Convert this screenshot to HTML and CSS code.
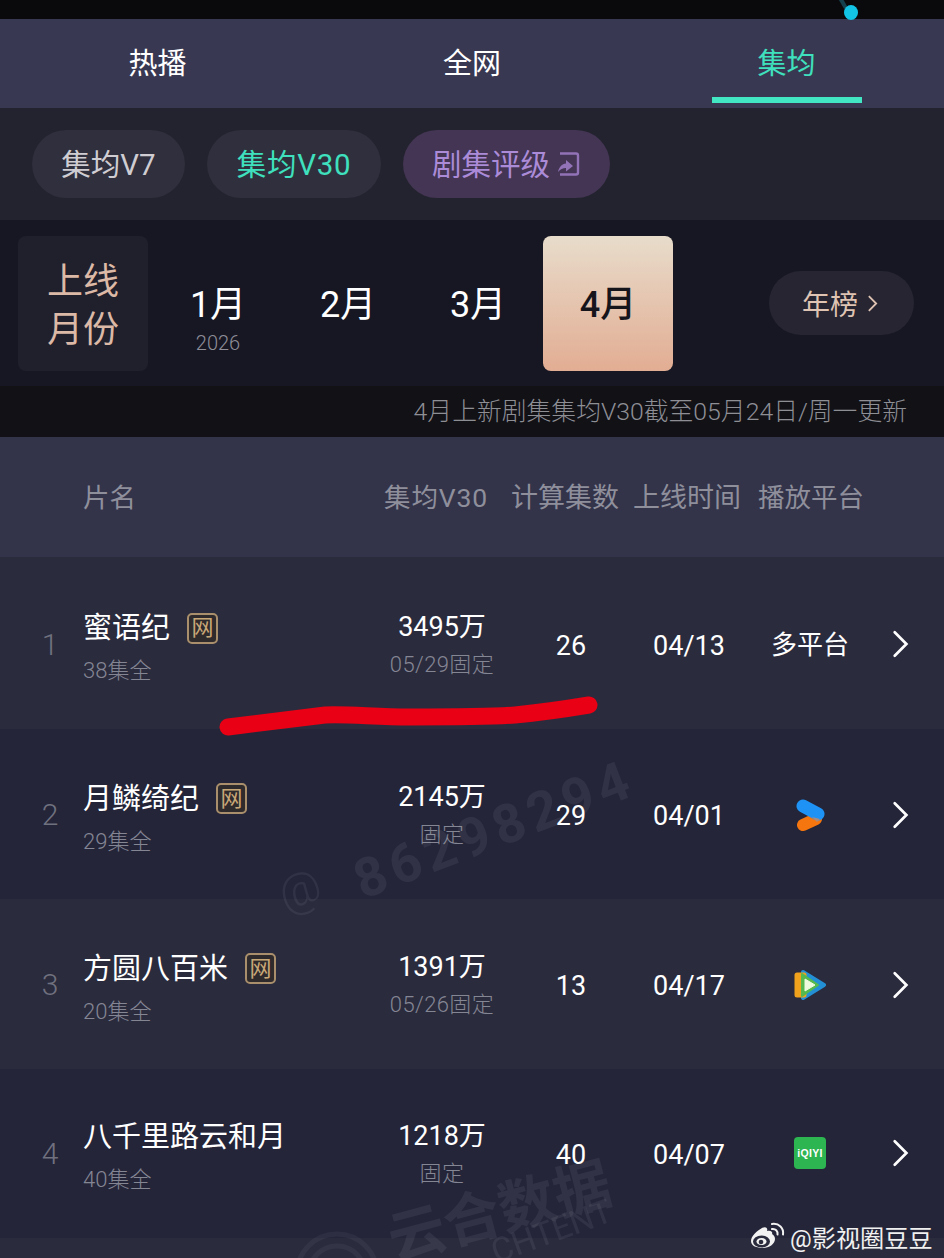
FILE: index.html
```html
<!DOCTYPE html>
<html lang="zh-CN">
<head>
  <meta charset="UTF-8">
  <title>集均榜</title>
  <link rel="stylesheet" href="styles.css">
</head>
<body>
  <div class="page">
    <div class="status"><span class="status-dot"></span></div>

    <div class="tabs">
      <div class="tab">热播</div>
      <div class="tab">全网</div>
      <div class="tab active">集均</div>
    </div>

    <div class="chips">
      <div class="chip">集均V7</div>
      <div class="chip green">集均V30</div>
      <div class="chip purple">剧集评级
        <svg class="share" viewBox="0 0 24 26" width="24" height="26" fill="none">
          <path d="M3 2.500h16a2 2 0 0 1 2 2v17a2 2 0 0 1-2 2H3" stroke="#9273b8" stroke-width="2.400"/>
          <path d="M1 21c1-5 4-8 8-8.500V9l7 6-7 5.500V17c-3 0-6 1.500-8 4z" fill="#9273b8"/>
        </svg>
      </div>
    </div>

    <div class="months">
      <div class="month-label">上线<br>月份</div>
      <div class="month"><b>1月</b><small>2026</small></div>
      <div class="month"><b>2月</b></div>
      <div class="month"><b>3月</b></div>
      <div class="month current"><b>4月</b></div>
      <div class="year-btn">年榜
        <svg viewBox="0 0 12 20" width="11" height="19" fill="none"><path d="M2 2l8 8-8 8" stroke="#dfc3b3" stroke-width="2"/></svg>
      </div>
    </div>

    <div class="note">4月上新剧集集均V30截至05月24日/周一更新</div>

    <div class="row head">
      <div class="name">片名</div>
      <div class="score">集均V30</div>
      <div class="count">计算集数</div>
      <div class="date">上线时间</div>
      <div class="platform">播放平台</div>
    </div>

    <div class="row light first">
      <div class="rank">1</div>
      <div class="name">
        <div class="title">蜜语纪<span class="tag">网</span></div>
        <div class="sub">38集全</div>
      </div>
      <div class="score"><div class="num">3495万</div><div class="sub">05/29固定</div></div>
      <div class="count">26</div>
      <div class="date">04/13</div>
      <div class="platform many">多平台</div>
      <div class="go"><svg viewBox="0 0 20 30" width="18" height="28" fill="none"><path d="M3 2l13 13L3 28" stroke="#fff" stroke-width="3" stroke-linecap="round"/></svg></div>
    </div>

    <div class="row">
      <div class="rank">2</div>
      <div class="name">
        <div class="title">月鳞绮纪<span class="tag">网</span></div>
        <div class="sub">29集全</div>
      </div>
      <div class="score"><div class="num">2145万</div><div class="sub">固定</div></div>
      <div class="count">29</div>
      <div class="date">04/01</div>
      <div class="platform">
        <svg class="logo" viewBox="0 0 31 34" width="31" height="34">
          <path d="M8 27L21 21" stroke="#f5760f" stroke-width="12" stroke-linecap="round"/>
          <path d="M8 8L23 16" stroke="#1e93f5" stroke-width="13" stroke-linecap="round"/>
          <path d="M17 19l8 2-3 3z" fill="#a98a80"/>
        </svg>
      </div>
      <div class="go"><svg viewBox="0 0 20 30" width="18" height="28" fill="none"><path d="M3 2l13 13L3 28" stroke="#fff" stroke-width="3" stroke-linecap="round"/></svg></div>
    </div>

    <div class="row light">
      <div class="rank">3</div>
      <div class="name">
        <div class="title">方圆八百米<span class="tag">网</span></div>
        <div class="sub">20集全</div>
      </div>
      <div class="score"><div class="num">1391万</div><div class="sub">05/26固定</div></div>
      <div class="count">13</div>
      <div class="date">04/17</div>
      <div class="platform">
        <svg class="logo" viewBox="0 0 36 34" width="36" height="34" stroke-linejoin="round">
          <path d="M11 4L32 17 11 30z" fill="#2390d6" stroke="#2390d6" stroke-width="4"/>
          <path d="M5 7h7v20H5z" fill="#f0a21d" stroke="#f0a21d" stroke-width="5"/>
          <path d="M10 6L26 17 10 28z" fill="#55b94e" stroke="#55b94e" stroke-width="2"/>
          <path d="M13 11L23 17 13 23z" fill="#eefadc" stroke="#eefadc"/>
        </svg>
      </div>
      <div class="go"><svg viewBox="0 0 20 30" width="18" height="28" fill="none"><path d="M3 2l13 13L3 28" stroke="#fff" stroke-width="3" stroke-linecap="round"/></svg></div>
    </div>

    <div class="row last">
      <div class="rank">4</div>
      <div class="name">
        <div class="title">八千里路云和月</div>
        <div class="sub">40集全</div>
      </div>
      <div class="score"><div class="num">1218万</div><div class="sub">固定</div></div>
      <div class="count">40</div>
      <div class="date">04/07</div>
      <div class="platform"><span class="iqiyi">iQIYI</span></div>
      <div class="go"><svg viewBox="0 0 20 30" width="18" height="28" fill="none"><path d="M3 2l13 13L3 28" stroke="#fff" stroke-width="3" stroke-linecap="round"/></svg></div>
    </div>

    <div class="row-rest"></div>

    <!-- things lying over the table -->
    <svg class="scribble" viewBox="0 0 944 60" width="944" height="60" fill="none">
      <path d="M228 35C270 30 300 26 325 23C350 22 375 25 410 25C450 25 490 25 515 23C545 20 565 17 589 13" stroke="#e90014" stroke-width="17" stroke-linecap="round"/>
    </svg>
    <div class="mark mark-at">@</div>
    <div class="mark mark-id">86298294</div>
    <svg class="mark-ring" viewBox="0 0 90 30" width="90" height="30" fill="none">
      <circle cx="45" cy="46" r="40" stroke="#fff" stroke-width="5"/>
      <circle cx="45" cy="46" r="28" stroke="#fff" stroke-width="5"/>
    </svg>
    <div class="mark mark-logo">云合数据</div>
    <div class="mark mark-en">CHTENT</div>

    <div class="weibo">
      <svg viewBox="0 0 36 30" width="36" height="30" fill="none">
        <path d="M1 19c0-5 6-10 11-13 4-2 6 0 5 3 4-1 6 1 5 3 2 1 3 3 3 5 0 5-6 9-12 9S1 24 1 19z" fill="#f2f2f2"/>
        <ellipse cx="11.500" cy="19.500" rx="8.500" ry="6" fill="#2a2b3d"/>
        <ellipse cx="11.500" cy="19.500" rx="5" ry="3.600" fill="#f2f2f2"/>
        <circle cx="11" cy="20" r="2.300" fill="#2a2b3d"/>
        <path d="M22 7c3.500-.5 6 2 5.500 5.500" stroke="#f2f2f2" stroke-width="2" stroke-linecap="round"/>
        <path d="M22 2c7-1 12 4 11 10.500" stroke="#f2f2f2" stroke-width="2" stroke-linecap="round"/>
      </svg>
      <span>@影视圈豆豆</span>
    </div>
  </div>
</body>
</html>
```

FILE: styles.css
```css
html, body {
  margin: 0;
  padding: 0;
}
body {
  font-family: Roboto, "Noto Sans CJK SC", sans-serif;
  background-color: #242539;
  color: #fff;
}
.page {
  position: relative;
  width: 944px;
  height: 1258px;
  overflow: hidden;
}
.status {
  position: relative;
  height: 19px;
  background-color: #0a0a0c;
}
.status::before {
  content: "";
  position: absolute;
  left: 841px;
  top: -3px;
  width: 4px;
  height: 12px;
  background-color: #15414f;
  transform: rotate(-30deg);
}
.status-dot {
  position: absolute;
  left: 844px;
  top: 5px;
  width: 14px;
  height: 15px;
  border-radius: 50%;
  background-color: #12c4e6;
}
.tabs {
  display: grid;
  grid-template-columns: 315px 314px 315px;
  height: 89px;
  background-color: #393852;
}
.tab {
  display: flex;
  justify-content: center;
  align-items: center;
  height: 89px;
  font-size: 29px;
  padding-bottom: 6px;
  box-sizing: border-box;
}
.tab.active {
  position: relative;
  color: #3fe0bd;
}
.tab.active::after {
  content: "";
  position: absolute;
  left: 83px;
  top: 78px;
  width: 150px;
  height: 6px;
  background-color: #43e6c2;
}
.chips {
  display: flex;
  align-items: center;
  gap: 22px;
  height: 112px;
  padding-left: 32px;
  background-color: #23232f;
}
.chip {
  display: flex;
  align-items: center;
  gap: 7px;
  width: 153px;
  height: 68px;
  justify-content: center;
  padding-bottom: 4px;
  box-sizing: border-box;
  border-radius: 34px;
  font-size: 29.500px;
  color: #cfcdd2;
  background-color: #2f2f3d;
}
.chip.green {
  width: 174px;
  letter-spacing: 0.700px;
  color: #3fe0bd;
}
.chip.purple {
  width: 207px;
  color: #ab8bd8;
  background-color: #433553;
}
.share {
  margin-top: 3px;
}
.months {
  display: flex;
  align-items: center;
  height: 166px;
  background-color: #171723;
}
.month-label {
  display: flex;
  align-items: center;
  justify-content: center;
  width: 130px;
  height: 135px;
  margin: 0 5px 0 18px;
  padding-top: 5px;
  box-sizing: border-box;
  border-radius: 8px;
  font-size: 36px;
  line-height: 48px;
  text-align: center;
  color: #dcb9a6;
  background-color: #20202d;
}
.month {
  position: relative;
  display: flex;
  align-items: center;
  justify-content: center;
  width: 130px;
  height: 135px;
  padding-bottom: 4px;
  box-sizing: border-box;
}
.month b {
  font-size: 36px;
  font-weight: 400;
}
.month small {
  position: absolute;
  left: 0;
  right: 0;
  top: 95px;
  text-align: center;
  font-size: 20px;
  font-weight: 300;
  color: #8f8e99;
}
.month.current {
  border-radius: 8px;
  color: #17151c;
  background: linear-gradient(#e8dccb, #e2ad93);
}
.month.current b {
  font-weight: 500;
}
.year-btn {
  display: flex;
  align-items: center;
  justify-content: center;
  gap: 9px;
  width: 145px;
  height: 64px;
  margin-left: 96px;
  padding-right: 3px;
  box-sizing: border-box;
  border-radius: 32px;
  font-size: 28px;
  color: #dfc3b3;
  background-color: #262531;
}
.note {
  height: 51px;
  line-height: 51px;
  padding-right: 37px;
  text-align: right;
  font-size: 24.800px;
  font-weight: 300;
  color: #8e8e95;
  background-color: #111116;
}
.row {
  display: grid;
  grid-template-columns: 83px 263px 192px 66px 170px 72px 98px;
  align-items: center;
  height: 170px;
  padding-top: 4px;
  box-sizing: border-box;
  background-color: #242539;
  text-align: center;
}
.row.light {
  background-color: #2a2b3d;
}
.row.first {
  height: 172px;
  padding-top: 5px;
}
.row.last {
  height: 169px;
  padding-top: 2px;
}
.row-rest {
  height: 20px;
  background-color: #2a2b3d;
}
.row.head {
  grid-template-columns: 301px 127px 122px 125px 185px;
  height: 120px;
  padding: 0 0 3px 83px;
  font-size: 26.500px;
  color: #8f8f9c;
  background-color: #33344a;
  text-align: left;
  white-space: nowrap;
}
.head .score {
  padding-bottom: 0;
  letter-spacing: 0.900px;
}
.head .platform {
  justify-content: flex-start;
  padding-bottom: 0;
  font-size: 26.500px;
}
.rank {
  padding: 0 0 3px 17px;
  box-sizing: border-box;
  text-align: center;
  font-size: 30px;
  font-weight: 300;
  color: #70717f;
  white-space: nowrap;
}
.name {
  padding-top: 2px;
  text-align: left;
}
.head .name {
  padding-top: 0;
}
.title {
  display: flex;
  align-items: center;
  font-size: 29px;
  line-height: 42px;
}
.tag {
  display: flex;
  align-items: center;
  justify-content: center;
  box-sizing: border-box;
  width: 31px;
  height: 31px;
  margin-left: 17px;
  border: 2px solid #a98f6c;
  border-radius: 5px;
  font-size: 22px;
  color: #c9a878;
  background-color: #2f2a2c;
}
.sub {
  margin-top: 7px;
  font-size: 22px;
  line-height: 30px;
  font-weight: 300;
  color: #858694;
}
.score {
  padding-bottom: 4px;
}
.num {
  font-size: 27px;
  line-height: 38px;
}
.score .sub {
  margin-top: 4px;
  letter-spacing: 0.400px;
}
.count,
.date {
  font-size: 27px;
}
.platform {
  display: flex;
  justify-content: center;
  align-items: center;
  padding-bottom: 3px;
  font-size: 26px;
  white-space: nowrap;
}
.platform.many {
  padding-bottom: 6px;
}
.logo {
  filter: blur(0.4px);
}
.go {
  display: flex;
  justify-content: center;
  padding: 0 0 3px 12px;
  box-sizing: border-box;
}
.iqiyi {
  display: flex;
  align-items: center;
  justify-content: center;
  width: 32px;
  height: 32px;
  border-radius: 4px;
  font-family: "Liberation Sans", sans-serif;
  font-size: 10.500px;
  letter-spacing: 0.300px;
  font-weight: 700;
  color: #fff;
  background-color: #2db551;
}
.scribble {
  position: absolute;
  left: 0;
  top: 692px;
}
.mark {
  position: absolute;
  color: #fff;
  opacity: 0.06;
  line-height: 1;
  white-space: nowrap;
  transform: rotate(-21deg);
  transform-origin: left bottom;
}
.mark-at {
  left: 288px;
  top: 872px;
  font-size: 46px;
  font-weight: 300;
}
.mark-id {
  left: 366px;
  top: 854px;
  font-size: 54px;
  font-weight: 700;
  letter-spacing: 6px;
}
.mark-ring {
  position: absolute;
  left: 292px;
  top: 1228px;
  opacity: 0.04;
}
.mark-logo {
  left: 397px;
  top: 1212px;
  font-size: 57px;
  font-weight: 700;
  transform: rotate(-15deg);
}
.mark-en {
  left: 498px;
  top: 1235px;
  font-size: 33px;
  transform: rotate(-20deg);
}
.weibo {
  position: absolute;
  left: 750px;
  top: 1219px;
  display: flex;
  align-items: center;
  gap: 4px;
  font-size: 24.200px;
  color: #f0f0f0;
}
```
